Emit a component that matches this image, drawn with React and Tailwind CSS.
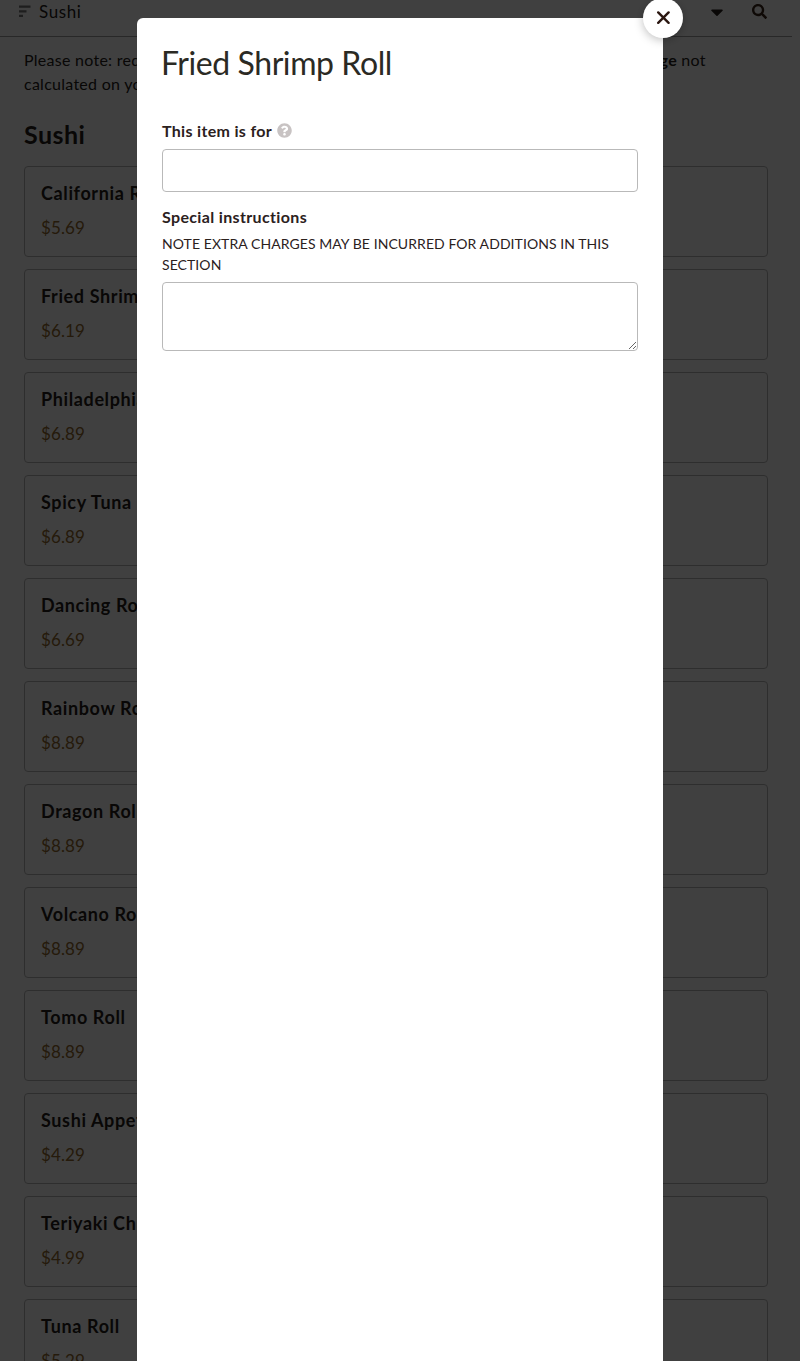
import { useState } from 'react';
import { FaCaretDown, FaQuestionCircle, FaSearch } from 'react-icons/fa';

const menuItems = [
  { id: 1, name: 'California Roll', price: '$5.69' },
  { id: 2, name: 'Fried Shrimp Roll', price: '$6.19' },
  { id: 3, name: 'Philadelphia Roll', price: '$6.89' },
  { id: 4, name: 'Spicy Tuna Roll', price: '$6.89' },
  { id: 5, name: 'Dancing Roll', price: '$6.69' },
  { id: 6, name: 'Rainbow Roll', price: '$8.89' },
  { id: 7, name: 'Dragon Roll', price: '$8.89' },
  { id: 8, name: 'Volcano Roll', price: '$8.89' },
  { id: 9, name: 'Tomo Roll', price: '$8.89' },
  { id: 10, name: 'Sushi Appetizer', price: '$4.29' },
  { id: 11, name: 'Teriyaki Chicken', price: '$4.99' },
  { id: 12, name: 'Tuna Roll', price: '$5.29' },
];

function CategoryBar() {
  return (
    <header className="mr-2 flex h-[37px] items-start border-b border-[#a0a0a0] pl-[19px] pr-[25px]">
      <svg className="mt-[5px] h-3 w-3 text-[#777]" viewBox="0 0 12 12" fill="none" stroke="currentColor" strokeWidth="2.4">
        <path d="M0 1.6h11.5M0 6.4h7.5M0 11h4" />
      </svg>
      <span className="ml-2 text-[17px] leading-6 tracking-[0.6px]">Sushi</span>
      <FaCaretDown className="ml-auto mt-[2px] text-[20px]" />
      <FaSearch className="ml-[25px] mt-1 text-[15px] text-[#3a2418]" />
    </header>
  );
}

function MenuCard({ item }) {
  return (
    <li className="h-[91px] shrink-0 rounded border border-[#b8b8b8] px-4 pt-3.5">
      <h3 className="text-[18px] font-bold leading-6 tracking-[0.62px]">{item.name}</h3>
      <p className="mt-[11px] text-[17px] leading-6 tracking-[0.1px] text-[#946a2c]">{item.price}</p>
    </li>
  );
}

function ItemModal({ title, onClose }) {
  const [recipient, setRecipient] = useState('');
  const [instructions, setInstructions] = useState('');

  return (
    <div className="fixed inset-0 flex justify-center bg-black/75 pt-[18px]">
      <div role="dialog" className="relative w-[526px] rounded-t-md bg-white px-[25px] pt-[25px] text-[#2b211d]">
        <button
          type="button"
          aria-label="Close"
          onClick={onClose}
          className="absolute -right-5 -top-5 flex h-10 w-10 items-center justify-center rounded-full bg-white shadow-[0_2px_10px_rgba(0,0,0,0.25)]"
        >
          <svg className="h-3.5 w-3.5" viewBox="0 0 14 14" fill="none" stroke="#2b1711" strokeWidth="2.4" strokeLinecap="round">
            <path d="M2.2 1.4l10.4 10.4M12.6 1.4L2.2 11.8" />
          </svg>
        </button>

        <h2 className="-ml-px whitespace-nowrap text-[32px] leading-10 tracking-[-0.42px] text-[#2b2a24]">{title}</h2>

        <div className="mt-9">
          <div className="flex items-center">
            <label htmlFor="recipient" className="text-[16px] font-bold leading-6 tracking-[0.32px]">This item is for</label>
            <FaQuestionCircle className="-mt-px ml-[5px] text-[15px] text-[#c8c3c3]" />
          </div>
          <input
            id="recipient"
            value={recipient}
            onChange={(e) => setRecipient(e.target.value)}
            className="mt-1.5 block h-[43px] w-full rounded border border-[#b9b9b9] px-3"
          />
        </div>

        <div className="mt-[13px]">
          <label htmlFor="instructions" className="block text-[16px] font-bold leading-6 tracking-[0.35px]">Special instructions</label>
          <p className="mt-1 text-[14px] leading-[21px] tracking-[0.07px]">
            NOTE EXTRA CHARGES MAY BE INCURRED FOR ADDITIONS IN THIS SECTION
          </p>
          <textarea
            id="instructions"
            value={instructions}
            onChange={(e) => setInstructions(e.target.value)}
            className="mt-[7px] block h-[69px] w-full rounded border border-[#b9b9b9] px-3"
          />
        </div>
      </div>
    </div>
  );
}

export default function App() {
  const [open, setOpen] = useState(true);

  return (
    <div className="h-screen overflow-hidden bg-white font-['Lato','Open_Sans',sans-serif] text-[#241c18]">
      <CategoryBar />
      <main className="pl-6 pr-8 pt-[11px]">
        <p className="text-[16px] leading-6 tracking-[0.265px]">
          Please note: requests for additional items or special preparation may incur an <b>extra charge</b> not calculated on your online order.
        </p>
        <h1 className="mt-[22px] text-[25px] font-bold leading-8 tracking-[0.45px]">Sushi</h1>
        <ul className="mt-4 flex flex-col gap-3">
          {menuItems.map((item) => (
            <MenuCard key={item.id} item={item} />
          ))}
        </ul>
      </main>
      {open && <ItemModal title="Fried Shrimp Roll" onClose={() => setOpen(false)} />}
    </div>
  );
}
